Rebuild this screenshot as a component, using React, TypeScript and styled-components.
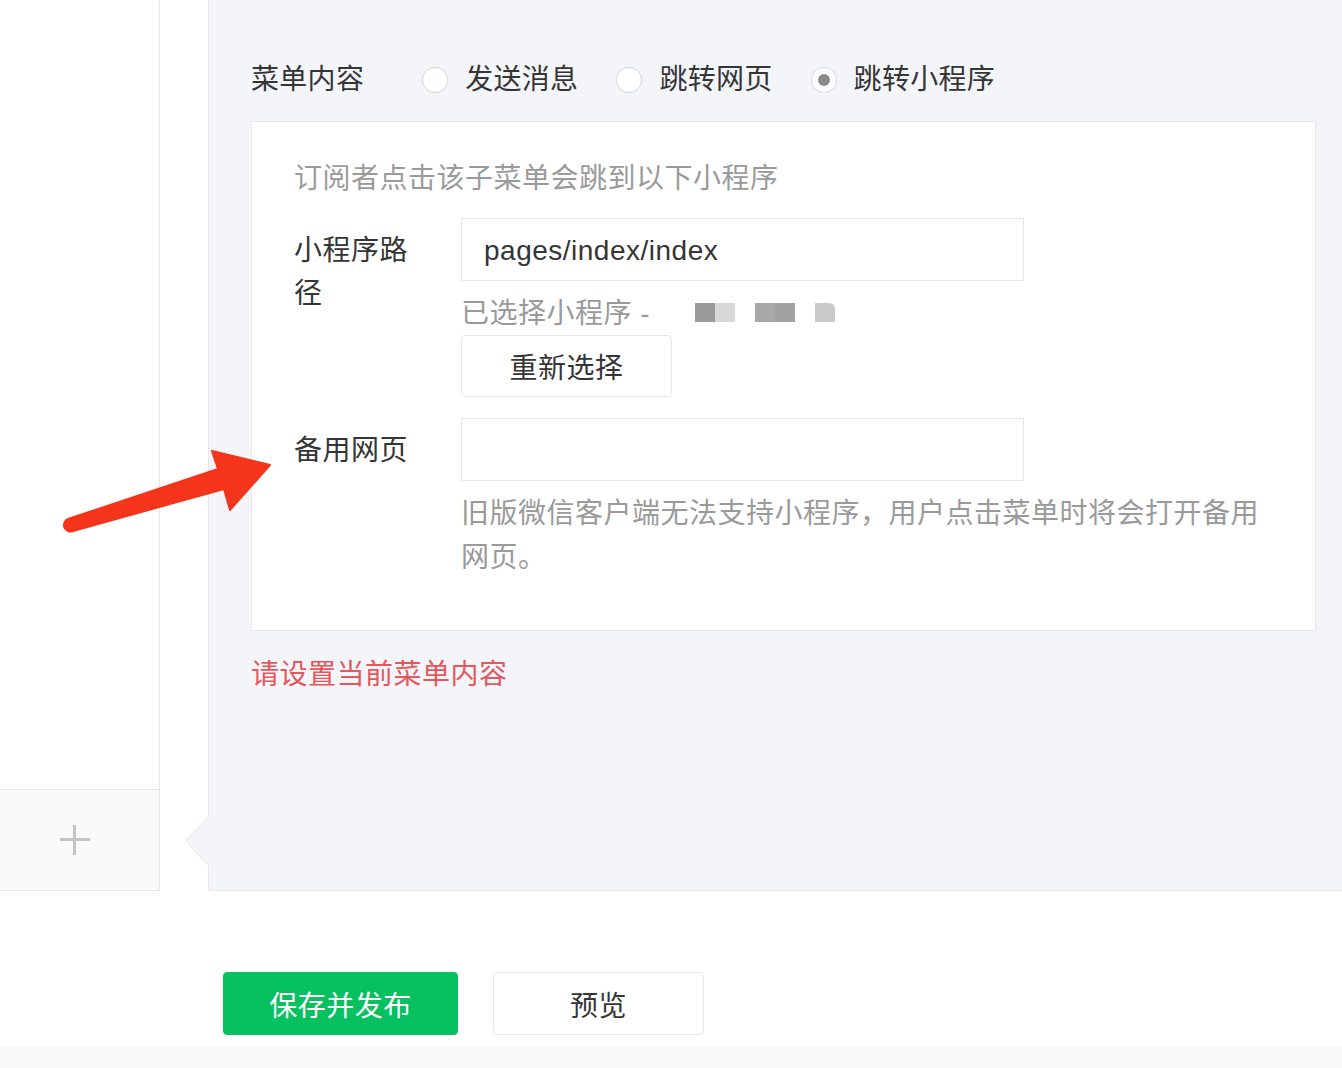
import React from "react";
import styled, { createGlobalStyle } from "styled-components";

const GlobalStyle = createGlobalStyle`
  html, body {
    margin: 0;
    padding: 0;
    background: #ffffff;
  }
  body {
    font-family: "Helvetica Neue", "Liberation Sans", "Noto Sans CJK SC", sans-serif;
    color: #353535;
    letter-spacing: 0.5px;
  }
`;

const Page = styled.div`
  position: relative;
  width: 1342px;
  height: 1068px;
  overflow: hidden;
  display: flex;
  flex-direction: column;
  background: #ffffff;
`;

const Main = styled.div`
  display: flex;
  height: 891px;
`;

const LeftCol = styled.div`
  width: 160px;
  border-right: 1px solid #e7e7eb;
  display: flex;
  flex-direction: column;
  justify-content: flex-end;
  background: #ffffff;
`;

const AddCell = styled.div`
  height: 100px;
  border-top: 1px solid #e7e7eb;
  border-bottom: 1px solid #e7e7eb;
  background: #fafafa;
  display: flex;
  align-items: center;
  justify-content: center;
  padding-right: 10px;
`;

const Plus = styled.div`
  position: relative;
  width: 30px;
  height: 30px;
  &::before,
  &::after {
    content: "";
    position: absolute;
    background: #c4c4c4;
  }
  &::before {
    left: 0;
    top: 13px;
    width: 30px;
    height: 3px;
  }
  &::after {
    left: 13px;
    top: 0;
    width: 3px;
    height: 30px;
  }
`;

const Panel = styled.div`
  position: relative;
  margin-left: 48px;
  flex: 1;
  background: #f4f5f9;
  border-left: 1px solid #e7e7eb;
  border-bottom: 1px solid #e7e7eb;
  padding: 53px 26px 0 42px;
`;

const Notch = styled.svg`
  position: absolute;
  left: -25px;
  bottom: 23px;
`;

const RadioRow = styled.div`
  display: flex;
  align-items: center;
  height: 50px;
  padding: 2px 0 2px;
  font-size: 28px;
  letter-spacing: 0.3px;
`;

const RowLabel = styled.span`
  margin-right: 58px;
  line-height: 50px;
`;

const Option = styled.label`
  display: flex;
  align-items: center;
  margin-right: 38px;
  line-height: 50px;
`;

const Circle = styled.span<{ $checked?: boolean }>`
  position: relative;
  width: 24px;
  height: 24px;
  border-radius: 50%;
  border: 1px solid #dadbde;
  background: #ffffff;
  box-shadow: 0 0 1px rgba(0, 0, 0, 0.08);
  margin-right: 17px;
  &::after {
    content: "";
    display: ${(p) => (p.$checked ? "block" : "none")};
    position: absolute;
    left: 6px;
    top: 6px;
    width: 12px;
    height: 12px;
    border-radius: 50%;
    background: #8a8a8a;
  }
`;

const Box = styled.div`
  margin-top: 14px;
  background: #ffffff;
  border: 1px solid #e4e8eb;
  padding: 35px 42px 50px 42px;
`;

const Hint = styled.div`
  font-size: 28px;
  line-height: 44px;
  color: #9a9a9a;
  margin-bottom: 17px;
`;

const FormRow = styled.div<{ $gap?: number }>`
  display: flex;
  align-items: flex-start;
  margin-top: ${(p) => p.$gap ?? 0}px;
`;

const FieldLabel = styled.div`
  width: 120px;
  margin-right: 47px;
  padding-top: 11px;
  font-size: 28px;
  line-height: 43px;
  color: #353535;
  word-break: break-all;
`;

const Field = styled.div`
  display: flex;
  flex-direction: column;
  align-items: flex-start;
`;

const Input = styled.div`
  box-sizing: border-box;
  width: 563px;
  height: 63px;
  border: 1px solid #e7e7eb;
  background: #ffffff;
  padding: 3px 0 0 22px;
  display: flex;
  align-items: center;
  font-size: 28px;
  color: #353535;
`;

const Selected = styled.div`
  display: flex;
  align-items: center;
  margin-top: 11px;
  height: 44px;
  font-size: 28px;
  line-height: 44px;
  color: #9a9a9a;
`;

const Blur = styled.span<{ $a: string; $b: string; $round?: boolean }>`
  display: inline-block;
  width: 40px;
  height: 19px;
  margin-left: 20px;
  position: relative;
  top: -2px;
  background: linear-gradient(
    to right,
    ${(p) => p.$a} 50%,
    ${(p) => p.$b} 50%
  );
  border-top-right-radius: ${(p) => (p.$round ? "6px" : "0")};
  &:first-of-type {
    margin-left: 45px;
  }
`;

const SmallBlur = styled(Blur)`
  width: 20px;
`;

const Button = styled.button<{ $primary?: boolean; $w: number }>`
  box-sizing: border-box;
  width: ${(p) => p.$w}px;
  height: 63px;
  border-radius: 4px;
  border: 1px solid ${(p) => (p.$primary ? "#07c160" : "#e4e8eb")};
  background: ${(p) => (p.$primary ? "#07c160" : "#ffffff")};
  color: ${(p) => (p.$primary ? "#ffffff" : "#353535")};
  font-family: inherit;
  font-size: 28px;
  letter-spacing: 0.5px;
  padding: 0;
  cursor: pointer;
`;

const ReselectButton = styled(Button)`
  height: 62px;
  margin-top: -1px;
`;

const Help = styled.div`
  width: 812px;
  margin-top: 11px;
  font-size: 28px;
  line-height: 44px;
  color: #9a9a9a;
`;

const Error = styled.div`
  margin-top: 22px;
  font-size: 28px;
  line-height: 44px;
  color: #e4575c;
`;

const Footer = styled.div`
  flex: 1;
  display: flex;
  flex-direction: column;
`;

const Actions = styled.div`
  display: flex;
  gap: 35px;
  padding: 81px 0 0 223px;
`;

const Band = styled.div`
  margin-top: auto;
  height: 22px;
  background: #f9f9f9;
`;

const ArrowMark = styled.svg`
  position: absolute;
  left: 0;
  top: 0;
  pointer-events: none;
`;

export default function App() {
  return (
    <>
      <GlobalStyle />
      <Page>
        <Main>
          <LeftCol>
            <AddCell>
              <Plus />
            </AddCell>
          </LeftCol>
          <Panel>
            <Notch width="26" height="52" viewBox="0 0 26 52">
              <path d="M25 1 L1.5 26 L25 51 L26 51 L26 1 Z" fill="#f4f5f9" />
              <polyline
                points="25,1 1.5,26 25,51"
                fill="none"
                stroke="#e7e7eb"
                strokeWidth="1"
              />
            </Notch>
            <RadioRow>
              <RowLabel>菜单内容</RowLabel>
              <Option>
                <Circle />
                发送消息
              </Option>
              <Option>
                <Circle />
                跳转网页
              </Option>
              <Option>
                <Circle $checked />
                跳转小程序
              </Option>
            </RadioRow>
            <Box>
              <Hint>订阅者点击该子菜单会跳到以下小程序</Hint>
              <FormRow>
                <FieldLabel>小程序路径</FieldLabel>
                <Field>
                  <Input>pages/index/index</Input>
                  <Selected>
                    已选择小程序 -
                    <Blur $a="#9b9b9b" $b="#d8d8d8" />
                    <Blur $a="#a8a8a8" $b="#a2a2a2" />
                    <SmallBlur $a="#cacaca" $b="#cacaca" $round />
                  </Selected>
                  <ReselectButton $w={211}>重新选择</ReselectButton>
                </Field>
              </FormRow>
              <FormRow $gap={21}>
                <FieldLabel>备用网页</FieldLabel>
                <Field>
                  <Input />
                  <Help>
                    旧版微信客户端无法支持小程序，用户点击菜单时将会打开备用网页。
                  </Help>
                </Field>
              </FormRow>
            </Box>
            <Error>请设置当前菜单内容</Error>
          </Panel>
        </Main>
        <Footer>
          <Actions>
            <Button $primary $w={235}>
              保存并发布
            </Button>
            <Button $w={211}>预览</Button>
          </Actions>
          <Band />
        </Footer>
        <ArrowMark width="300" height="560" viewBox="0 0 300 560">
          <path
            d="M212 451 L270 465 L230 510 L224 489 L73 531 A6 6 0 0 1 68 519 L218 469 Z"
            fill="#f5341c"
            stroke="#f5341c"
            strokeWidth="2"
            strokeLinejoin="round"
          />
        </ArrowMark>
      </Page>
    </>
  );
}
